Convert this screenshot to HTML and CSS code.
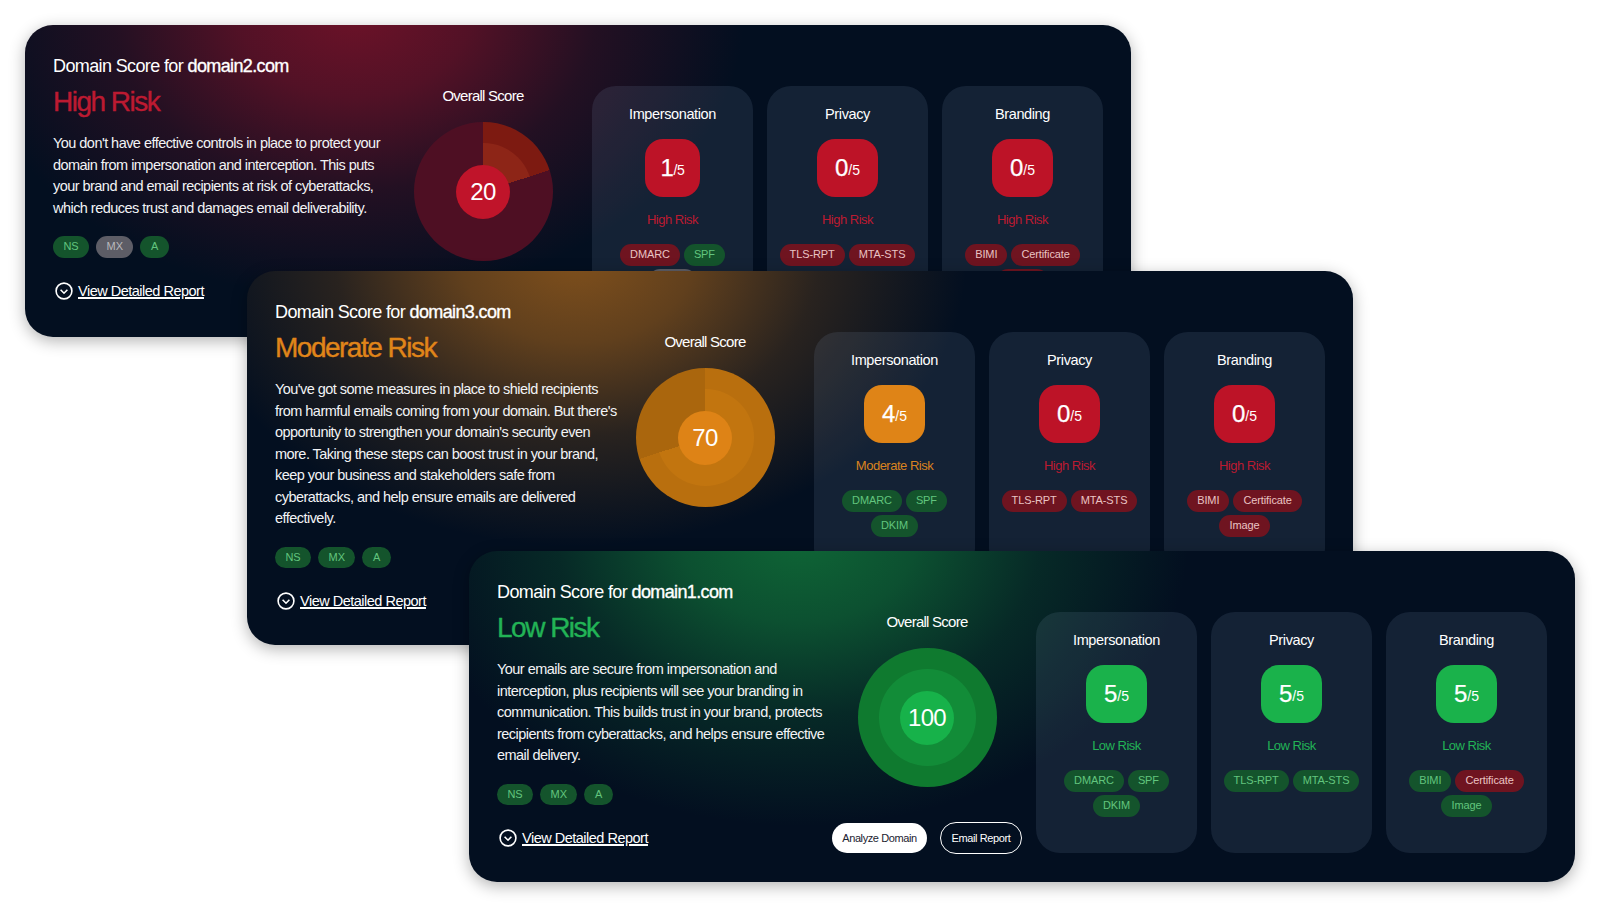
FILE: index.html
```html
<!DOCTYPE html>
<html lang="en">
<head>
    <meta charset="UTF-8">
    <meta name="viewport" content="width=device-width, initial-scale=1.0">
    <title>Domain Score</title>
    <link rel="stylesheet" href="styles.css">
</head>
<body>
    <div class="stage">

        <!-- domain2.com -->
        <section class="card card-high">
            <div class="summary">
                <div class="intro">
                    <h2>Domain Score for <strong>domain2.com</strong></h2>
                    <h3 class="risk-title">High Risk</h3>
                    <p>You don't have effective controls in place to protect your domain from impersonation and interception. This puts your brand and email recipients at risk of cyberattacks, which reduces trust and damages email deliverability.</p>
                    <div class="tags tags-left">
                        <span class="tag pass">NS</span>
                        <span class="tag none">MX</span>
                        <span class="tag pass">A</span>
                    </div>
                </div>
                <div class="overall">
                    <div class="overall-label">Overall Score</div>
                    <div class="dial"><div class="dial-mid"><div class="dial-core">20</div></div></div>
                </div>
                <div class="actions">
                    <a class="report-link" href="#">
                        <svg viewBox="0 0 18 18" width="18" height="18"><circle cx="9" cy="9" r="7.9" fill="none" stroke="#fff" stroke-width="1.6"/><path d="M5.6 7.8 9 11.2l3.4-3.4" fill="none" stroke="#fff" stroke-width="1.6"/></svg>
                        <span>View Detailed Report</span>
                    </a>
                </div>
            </div>
            <div class="panels">
                <div class="panel">
                    <div class="panel-title">Impersonation</div>
                    <div class="badge badge-narrow high">1<small>/5</small></div>
                    <div class="panel-risk high-text">High Risk</div>
                    <div class="tags">
                        <span class="tag fail">DMARC</span>
                        <span class="tag pass">SPF</span>
                        <span class="tag none">DKIM</span>
                    </div>
                </div>
                <div class="panel">
                    <div class="panel-title">Privacy</div>
                    <div class="badge high">0<small>/5</small></div>
                    <div class="panel-risk high-text">High Risk</div>
                    <div class="tags">
                        <span class="tag fail">TLS-RPT</span>
                        <span class="tag fail">MTA-STS</span>
                    </div>
                </div>
                <div class="panel">
                    <div class="panel-title">Branding</div>
                    <div class="badge high">0<small>/5</small></div>
                    <div class="panel-risk high-text">High Risk</div>
                    <div class="tags">
                        <span class="tag fail">BIMI</span>
                        <span class="tag fail">Certificate</span>
                        <span class="tag fail">Image</span>
                    </div>
                </div>
            </div>
        </section>

        <!-- domain3.com -->
        <section class="card card-moderate">
            <div class="summary">
                <div class="intro">
                    <h2>Domain Score for <strong>domain3.com</strong></h2>
                    <h3 class="risk-title">Moderate Risk</h3>
                    <p>You've got some measures in place to shield recipients from harmful emails coming from your domain. But there's opportunity to strengthen your domain's security even more. Taking these steps can boost trust in your brand, keep your business and stakeholders safe from cyberattacks, and help ensure emails are delivered effectively.</p>
                    <div class="tags tags-left">
                        <span class="tag pass">NS</span>
                        <span class="tag pass">MX</span>
                        <span class="tag pass">A</span>
                    </div>
                </div>
                <div class="overall">
                    <div class="overall-label">Overall Score</div>
                    <div class="dial"><div class="dial-mid"><div class="dial-core">70</div></div></div>
                </div>
                <div class="actions">
                    <a class="report-link" href="#">
                        <svg viewBox="0 0 18 18" width="18" height="18"><circle cx="9" cy="9" r="7.9" fill="none" stroke="#fff" stroke-width="1.6"/><path d="M5.6 7.8 9 11.2l3.4-3.4" fill="none" stroke="#fff" stroke-width="1.6"/></svg>
                        <span>View Detailed Report</span>
                    </a>
                </div>
            </div>
            <div class="panels">
                <div class="panel">
                    <div class="panel-title">Impersonation</div>
                    <div class="badge moderate">4<small>/5</small></div>
                    <div class="panel-risk moderate-text">Moderate Risk</div>
                    <div class="tags">
                        <span class="tag pass">DMARC</span>
                        <span class="tag pass">SPF</span>
                        <span class="tag pass">DKIM</span>
                    </div>
                </div>
                <div class="panel">
                    <div class="panel-title">Privacy</div>
                    <div class="badge high">0<small>/5</small></div>
                    <div class="panel-risk high-text">High Risk</div>
                    <div class="tags">
                        <span class="tag fail">TLS-RPT</span>
                        <span class="tag fail">MTA-STS</span>
                    </div>
                </div>
                <div class="panel">
                    <div class="panel-title">Branding</div>
                    <div class="badge high">0<small>/5</small></div>
                    <div class="panel-risk high-text">High Risk</div>
                    <div class="tags">
                        <span class="tag fail">BIMI</span>
                        <span class="tag fail">Certificate</span>
                        <span class="tag fail">Image</span>
                    </div>
                </div>
            </div>
        </section>

        <!-- domain1.com -->
        <section class="card card-low">
            <div class="summary">
                <div class="intro">
                    <h2>Domain Score for <strong>domain1.com</strong></h2>
                    <h3 class="risk-title">Low Risk</h3>
                    <p>Your emails are secure from impersonation and interception, plus recipients will see your branding in communication. This builds trust in your brand, protects recipients from cyberattacks, and helps ensure effective email delivery.</p>
                    <div class="tags tags-left">
                        <span class="tag pass">NS</span>
                        <span class="tag pass">MX</span>
                        <span class="tag pass">A</span>
                    </div>
                </div>
                <div class="overall">
                    <div class="overall-label">Overall Score</div>
                    <div class="dial"><div class="dial-mid"><div class="dial-core">100</div></div></div>
                </div>
                <div class="actions">
                    <a class="report-link" href="#">
                        <svg viewBox="0 0 18 18" width="18" height="18"><circle cx="9" cy="9" r="7.9" fill="none" stroke="#fff" stroke-width="1.6"/><path d="M5.6 7.8 9 11.2l3.4-3.4" fill="none" stroke="#fff" stroke-width="1.6"/></svg>
                        <span>View Detailed Report</span>
                    </a>
                    <div class="buttons">
                        <button class="btn btn-solid">Analyze Domain</button>
                        <button class="btn btn-outline">Email Report</button>
                    </div>
                </div>
            </div>
            <div class="panels">
                <div class="panel">
                    <div class="panel-title">Impersonation</div>
                    <div class="badge low">5<small>/5</small></div>
                    <div class="panel-risk low-text">Low Risk</div>
                    <div class="tags">
                        <span class="tag pass">DMARC</span>
                        <span class="tag pass">SPF</span>
                        <span class="tag pass">DKIM</span>
                    </div>
                </div>
                <div class="panel">
                    <div class="panel-title">Privacy</div>
                    <div class="badge low">5<small>/5</small></div>
                    <div class="panel-risk low-text">Low Risk</div>
                    <div class="tags">
                        <span class="tag pass">TLS-RPT</span>
                        <span class="tag pass">MTA-STS</span>
                    </div>
                </div>
                <div class="panel">
                    <div class="panel-title">Branding</div>
                    <div class="badge low">5<small>/5</small></div>
                    <div class="panel-risk low-text">Low Risk</div>
                    <div class="tags">
                        <span class="tag pass">BIMI</span>
                        <span class="tag fail">Certificate</span>
                        <span class="tag pass">Image</span>
                    </div>
                </div>
            </div>
        </section>

    </div>
</body>
</html>
```

FILE: styles.css
```css
body {
    font-family: "Liberation Sans", Arial, sans-serif;
    margin: 0;
    background-color: #fff;
    color: #fff;
    overflow: hidden;
}

.stage {
    position: relative;
    width: 1600px;
    height: 907px;
}

/* the three cards sit on a free canvas and overlap each other */
.card {
    position: absolute;
    box-sizing: border-box;
    width: 1106px;
    padding: 28px;
    display: flex;
    gap: 14px;
    border-radius: 28px;
    overflow: hidden;
    box-shadow: 0 4px 16px rgba(0, 0, 0, 0.3);
}

.card-high {
    left: 25px;
    top: 25px;
    height: 312px;
    --accent: #bc1a31;
    --score: 20%;
    --dial-rest: #4e0f23;
    --dial-outer: #7d1a11;
    --dial-mid: #8d2517;
    --dial-core: #c0142a;
    background: radial-gradient(ellipse 390px 290px at 330px -15px, #6d1228 0%, rgba(109, 18, 40, 0.75) 30%, rgba(109, 18, 40, 0.3) 62%, rgba(109, 18, 40, 0) 100%), #030f20;
}

.card-moderate {
    left: 247px;
    top: 271px;
    height: 374px;
    --accent: #e08519;
    --score: 70%;
    --dial-rest: #aa660d;
    --dial-outer: #b96f0e;
    --dial-mid: #c2750f;
    --dial-core: #de8316;
    background: radial-gradient(ellipse 390px 290px at 330px -15px, #80501c 0%, rgba(128, 80, 28, 0.75) 30%, rgba(128, 80, 28, 0.3) 62%, rgba(128, 80, 28, 0) 100%), #030f20;
}

.card-low {
    left: 469px;
    top: 551px;
    height: 331px;
    --accent: #22b356;
    --score: 100%;
    --dial-rest: #0f7a2f;
    --dial-outer: #0f7a2f;
    --dial-mid: #128c38;
    --dial-core: #17b24a;
    background: radial-gradient(ellipse 390px 290px at 330px -15px, #0f6636 0%, rgba(15, 102, 54, 0.75) 30%, rgba(15, 102, 54, 0.3) 62%, rgba(15, 102, 54, 0) 100%), #030f20;
}

.summary {
    width: 525px;
    flex-shrink: 0;
    display: grid;
    grid-template-columns: 340px 180px 1fr;
    grid-template-rows: auto auto;
    align-content: start;
}

.intro h2 {
    margin: 0;
    font-size: 18px;
    font-weight: 400;
    line-height: 26px;
    letter-spacing: -0.62px;
}

.intro strong {
    font-weight: 400;
    -webkit-text-stroke: 0.35px #fff;
}

.risk-title {
    margin: 5px 0 0;
    font-size: 28px;
    font-weight: 400;
    line-height: 35px;
    letter-spacing: -1.5px;
    color: var(--accent);
    -webkit-text-stroke: 0.4px var(--accent);
}

.intro p {
    width: 346px;
    margin: 14px 0 0;
    font-size: 14.5px;
    line-height: 21.5px;
    letter-spacing: -0.54px;
    color: #f2f3f5;
}

/* the dial may hang past the text column without pushing the link down */
.overall {
    display: flex;
    flex-direction: column;
    align-items: center;
    padding-top: 33px;
    margin-bottom: -10px;
}

.overall-label {
    font-size: 15px;
    line-height: 20px;
    letter-spacing: -0.75px;
}

.dial {
    width: 139px;
    height: 139px;
    margin-top: 16px;
    border-radius: 50%;
    display: flex;
    align-items: center;
    justify-content: center;
    background: conic-gradient(var(--dial-outer) 0 var(--score), var(--dial-rest) 0);
}

.dial-mid {
    width: 97px;
    height: 97px;
    border-radius: 50%;
    display: flex;
    align-items: center;
    justify-content: center;
    background: conic-gradient(var(--dial-mid) 0 var(--score), var(--dial-rest) 0);
}

.dial-core {
    width: 54px;
    height: 54px;
    padding-top: 1px;
    box-sizing: border-box;
    border-radius: 50%;
    display: flex;
    align-items: center;
    justify-content: center;
    font-size: 24px;
    letter-spacing: -0.7px;
    background-color: var(--dial-core);
}

.tags {
    display: flex;
    flex-wrap: wrap;
    justify-content: center;
    gap: 3.5px 4px;
    margin-top: 15px;
    padding: 0 8px;
}

.tags-left {
    justify-content: flex-start;
    gap: 7px;
    margin-top: 17px;
    padding: 0;
}

.tag {
    height: 21.5px;
    padding: 0 10px;
    border-radius: 11px;
    font-size: 11px;
    line-height: 21.5px;
    letter-spacing: -0.1px;
}

.tags-left .tag {
    padding: 0 10.5px;
}

.pass {
    background-color: #14542c;
    color: #62c57e;
}

.fail {
    background-color: #6f1420;
    color: #eac3c3;
}

.none {
    background-color: #5d5d66;
    color: #b9b9bd;
}

.actions {
    grid-column: 1 / -1;
    display: flex;
    align-items: center;
    justify-content: space-between;
    height: 32px;
    margin-top: 17px;
}

.report-link {
    display: flex;
    align-items: center;
    gap: 5px;
    margin-left: 2px;
    color: #fff;
    font-size: 14.5px;
    letter-spacing: -0.5px;
}

.report-link span {
    text-decoration: underline;
    text-underline-offset: 2px;
}

.buttons {
    display: flex;
    align-items: center;
    gap: 13px;
}

.btn {
    font-family: inherit;
    font-size: 11px;
    letter-spacing: -0.4px;
    border-radius: 16px;
}

.btn-solid {
    width: 95px;
    height: 30px;
    border: none;
    background-color: #fff;
    color: #1b2230;
}

.btn-outline {
    width: 82px;
    height: 32px;
    border: 1px solid #fff;
    background: none;
    color: #fff;
}

.panels {
    display: flex;
    gap: 14px;
    margin-top: 33px;
}

.panel {
    box-sizing: border-box;
    width: 161px;
    height: 241px;
    padding-top: 16px;
    display: flex;
    flex-direction: column;
    align-items: center;
    border-radius: 24px;
    background-color: rgba(160, 190, 230, 0.11);
}

.panel-title {
    font-size: 14.5px;
    line-height: 24px;
    letter-spacing: -0.38px;
}

.badge {
    height: 58px;
    margin-top: 13px;
    padding: 0 18px;
    display: flex;
    align-items: center;
    border-radius: 18px;
    font-size: 24px;
    -webkit-text-stroke: 0.25px #fff;
}

.badge-narrow {
    padding: 0 15.5px;
    letter-spacing: -0.4px;
}

.badge small {
    font-size: 14px;
    margin-top: 4px;
    -webkit-text-stroke: 0;
}

.high { background-color: #bd1327; }
.moderate { background-color: #df8417; }
.low { background-color: #1ab24b; }

.panel-risk {
    margin-top: 14px;
    font-size: 13px;
    line-height: 18px;
    letter-spacing: -0.5px;
}

.high-text { color: #bc1a31; }
.moderate-text { color: #d98320; }
.low-text { color: #22b356; }
```
